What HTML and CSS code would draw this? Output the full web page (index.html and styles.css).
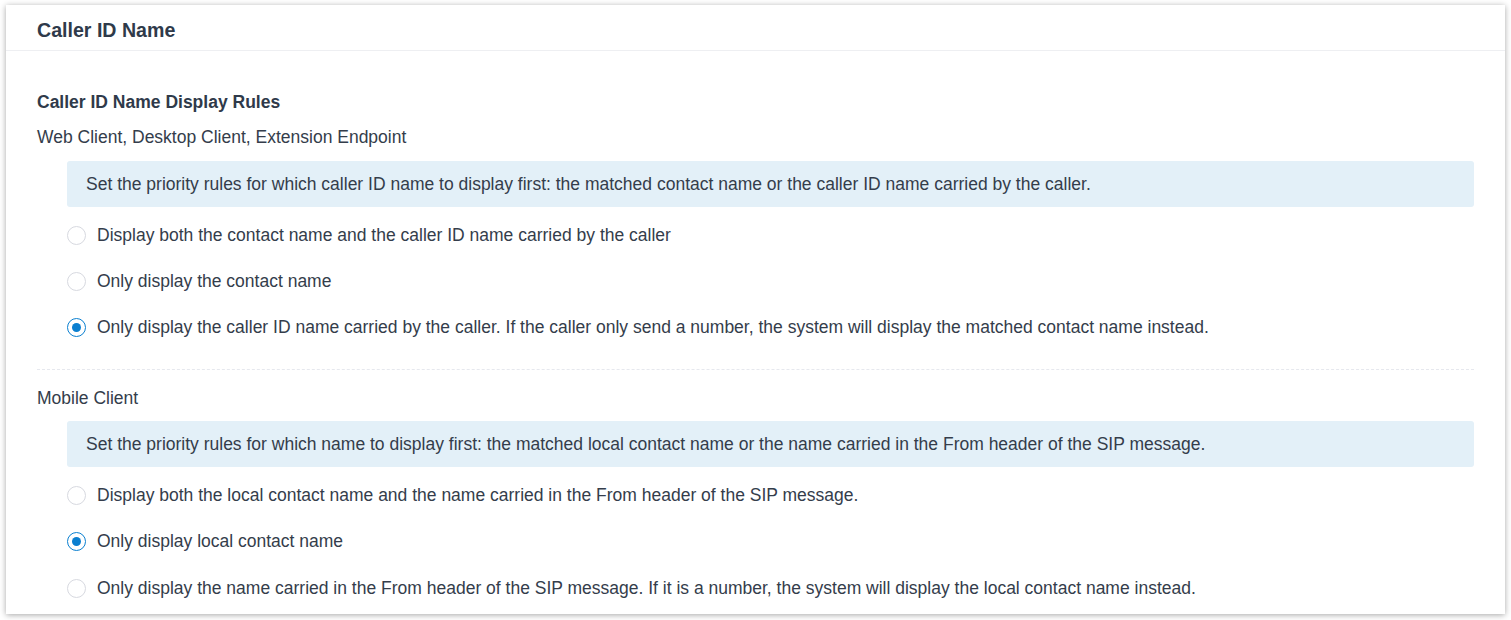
FILE: index.html
```html
<!DOCTYPE html>
<html lang="en">
<head>
  <meta charset="UTF-8" />
  <meta name="viewport" content="width=device-width, initial-scale=1.0"/>
  <title>Caller ID Name</title>
  <link rel="stylesheet" href="styles.css">
</head>
<body>

<div class="panel">
  <div class="panel-header">Caller ID Name</div>

  <div class="panel-body">
    <div class="rules-title">Caller ID Name Display Rules</div>

    <div class="group">
      <div class="group-label">Web Client, Desktop Client, Extension Endpoint</div>
      <div class="indent">
        <div class="tip">Set the priority rules for which caller ID name to display first: the matched contact name or the caller ID name carried by the caller.</div>
        <label class="radio-row">
          <span class="radio"></span>
          <span>Display both the contact name and the caller ID name carried by the caller</span>
        </label>
        <label class="radio-row">
          <span class="radio"></span>
          <span>Only display the contact name</span>
        </label>
        <label class="radio-row">
          <span class="radio checked"></span>
          <span>Only display the caller ID name carried by the caller. If the caller only send a number, the system will display the matched contact name instead.</span>
        </label>
      </div>
    </div>

    <div class="divider"></div>

    <div class="group">
      <div class="group-label">Mobile Client</div>
      <div class="indent">
        <div class="tip">Set the priority rules for which name to display first: the matched local contact name or the name carried in the From header of the SIP message.</div>
        <label class="radio-row">
          <span class="radio"></span>
          <span>Display both the local contact name and the name carried in the From header of the SIP message.</span>
        </label>
        <label class="radio-row">
          <span class="radio checked"></span>
          <span>Only display local contact name</span>
        </label>
        <label class="radio-row">
          <span class="radio"></span>
          <span>Only display the name carried in the From header of the SIP message. If it is a number, the system will display the local contact name instead.</span>
        </label>
      </div>
    </div>
  </div>
</div>

</body>
</html>
```

FILE: styles.css
```css
html, body {
  margin: 0;
  padding: 0;
}
body {
  font-family: "Liberation Sans", Arial, sans-serif;
  font-size: 17.5px;
  color: #343d4b;
  background: #fff;
  height: 620px;
  overflow: hidden;
}
.panel {
  margin: 5px 6px 0 6px;
  height: 609px;
  background: #fff;
  box-shadow: 0 1px 6px rgba(0, 0, 0, 0.35);
  overflow: hidden;
}
.panel-header {
  box-sizing: border-box;
  height: 46px;
  line-height: 50px;
  padding-left: 31px;
  font-size: 19.6px;
  font-weight: bold;
  color: #2f3a4a;
  border-bottom: 1px solid #eeeff2;
}
.panel-body {
  padding: 39px 31px 0 31px;
}
.rules-title {
  font-weight: bold;
  line-height: 24px;
  color: #2f3a4a;
}
.group-label {
  line-height: 24px;
  margin-top: 11px;
}
.indent {
  margin-left: 30px;
  margin-top: 12px;
}
.tip {
  background: #e3f0f8;
  border-radius: 3px;
  height: 46px;
  line-height: 47px;
  padding-left: 19px;
  margin-bottom: 5px;
}
.radio-row {
  display: flex;
  align-items: center;
  height: 46px;
  line-height: 48px;
  cursor: pointer;
}
.radio {
  width: 19px;
  height: 19px;
  box-sizing: border-box;
  border: 1px solid #d7d9e0;
  border-radius: 50%;
  margin-right: 11px;
  flex-shrink: 0;
  display: flex;
  align-items: center;
  justify-content: center;
}
.radio.checked {
  border-color: #0a7fd0;
}
.radio.checked::after {
  content: "";
  width: 9px;
  height: 9px;
  border-radius: 50%;
  background: #0a7fd0;
}
.divider {
  border-top: 1px dashed #e6e8ee;
  margin-top: 19px;
}
.divider + .group .group-label {
  margin-top: 16px;
}
.divider + .group .indent {
  margin-top: 11px;
}
.divider + .group .radio-row:last-child {
  height: 48px;
}
```
